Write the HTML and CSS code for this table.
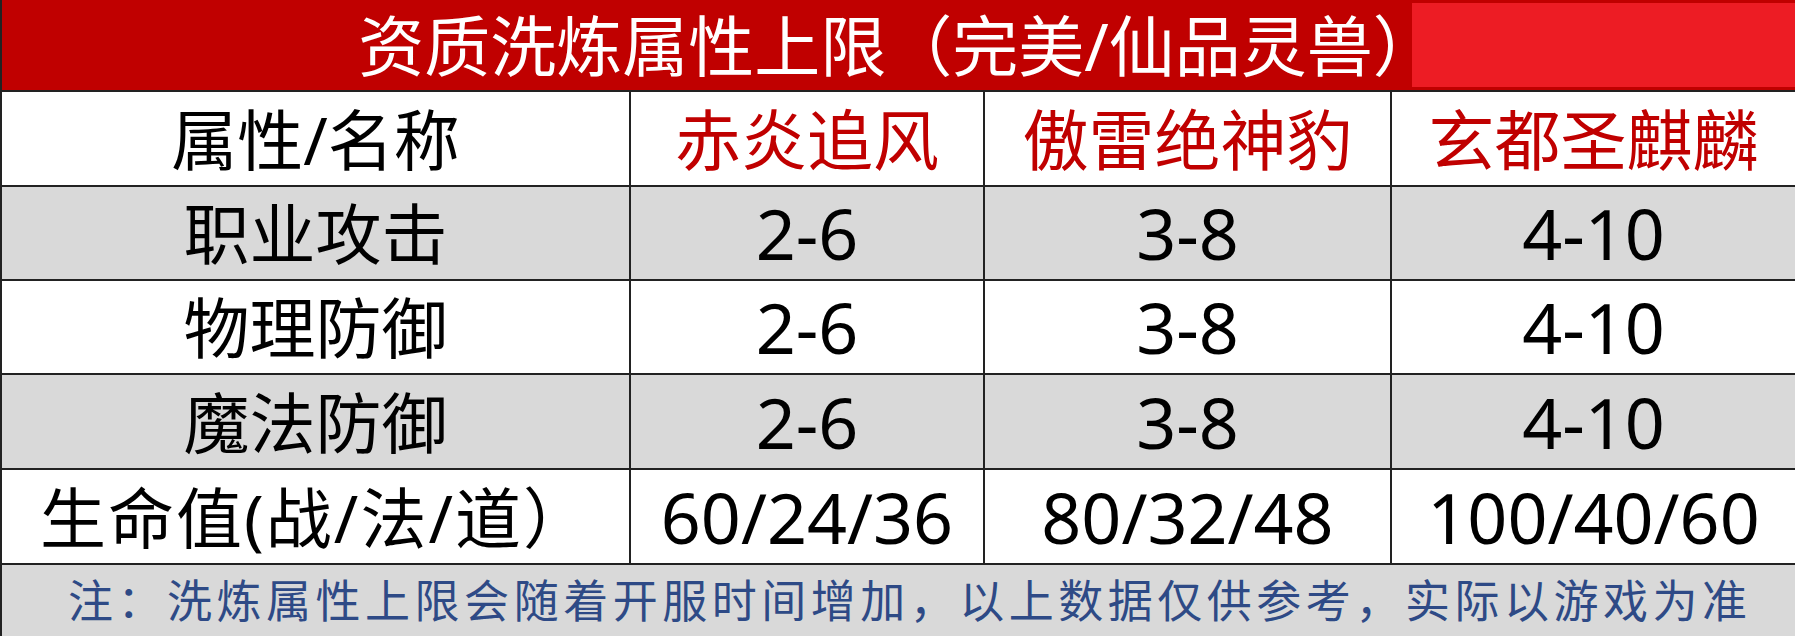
FILE: index.html
```html
<!DOCTYPE html>
<html lang="zh-CN">
<head>
<meta charset="utf-8">
<title>资质洗炼属性上限</title>
<link rel="stylesheet" href="styles.css">
</head>
<body>
<div class="sheet">
  <div class="title">
    <span class="title-text">资质洗炼属性上限（完美/仙品灵兽）</span>
    <div class="cover"></div>
  </div>
  <div class="grid">
    <div class="cell w">属性/名称</div>
    <div class="cell w red">赤炎追风</div>
    <div class="cell w red">傲雷绝神豹</div>
    <div class="cell w red last">玄都圣麒麟</div>

    <div class="cell g">职业攻击</div>
    <div class="cell g num">2-6</div>
    <div class="cell g num">3-8</div>
    <div class="cell g num last">4-10</div>

    <div class="cell w">物理防御</div>
    <div class="cell w num">2-6</div>
    <div class="cell w num">3-8</div>
    <div class="cell w num last">4-10</div>

    <div class="cell g">魔法防御</div>
    <div class="cell g num">2-6</div>
    <div class="cell g num">3-8</div>
    <div class="cell g num last">4-10</div>

    <div class="cell w wide">生命值(战/法/道）</div>
    <div class="cell w num">60/24/36</div>
    <div class="cell w num">80/32/48</div>
    <div class="cell w num last">100/40/60</div>
  </div>
  <div class="note">注：洗炼属性上限会随着开服时间增加，以上数据仅供参考，实际以游戏为准</div>
</div>
</body>
</html>
```

FILE: styles.css
```css
html, body {
  margin: 0;
  padding: 0;
  background: #ffffff;
}

.sheet {
  width: 1795px;
  height: 636px;
  overflow: hidden;
  border-left: 2px solid #222222;
  box-sizing: border-box;
  font-family: "Noto Sans", "Noto Sans CJK SC", sans-serif;
  color: #000000;
}

.title {
  position: relative;
  height: 90px;
  border-bottom: 2px solid #222222;
  background: #c00000;
  display: flex;
  align-items: center;
  justify-content: center;
  color: #ffffff;
  font-size: 66px;
  line-height: 1;
}

.title-text {
  white-space: nowrap;
}

.cover {
  position: absolute;
  left: 1410px;
  top: 3px;
  right: 0;
  height: 84px;
  background: #ed1c24;
}

.grid {
  display: grid;
  grid-template-columns: 629px 354px 407px 1fr;
  grid-template-rows: 95px 94px 94px 95px 95px;
}

.cell {
  display: flex;
  align-items: center;
  justify-content: center;
  border-right: 2px solid #222222;
  border-bottom: 2px solid #222222;
  font-size: 66px;
  line-height: 1;
  white-space: nowrap;
}

.cell.last {
  border-right: none;
}

.cell.wide {
  letter-spacing: 2px;
}

.w {
  background: #ffffff;
}

.g {
  background: #d9d9d9;
}

.red {
  color: #c00000;
}

.num {
  font-size: 70px;
}

.note {
  height: 71px;
  background: #d9d9d9;
  color: #2e4a86;
  font-size: 45px;
  line-height: 71px;
  padding: 0 48px 0 66px;
  text-align: justify;
  text-align-last: justify;
  white-space: nowrap;
  overflow: hidden;
}
```
